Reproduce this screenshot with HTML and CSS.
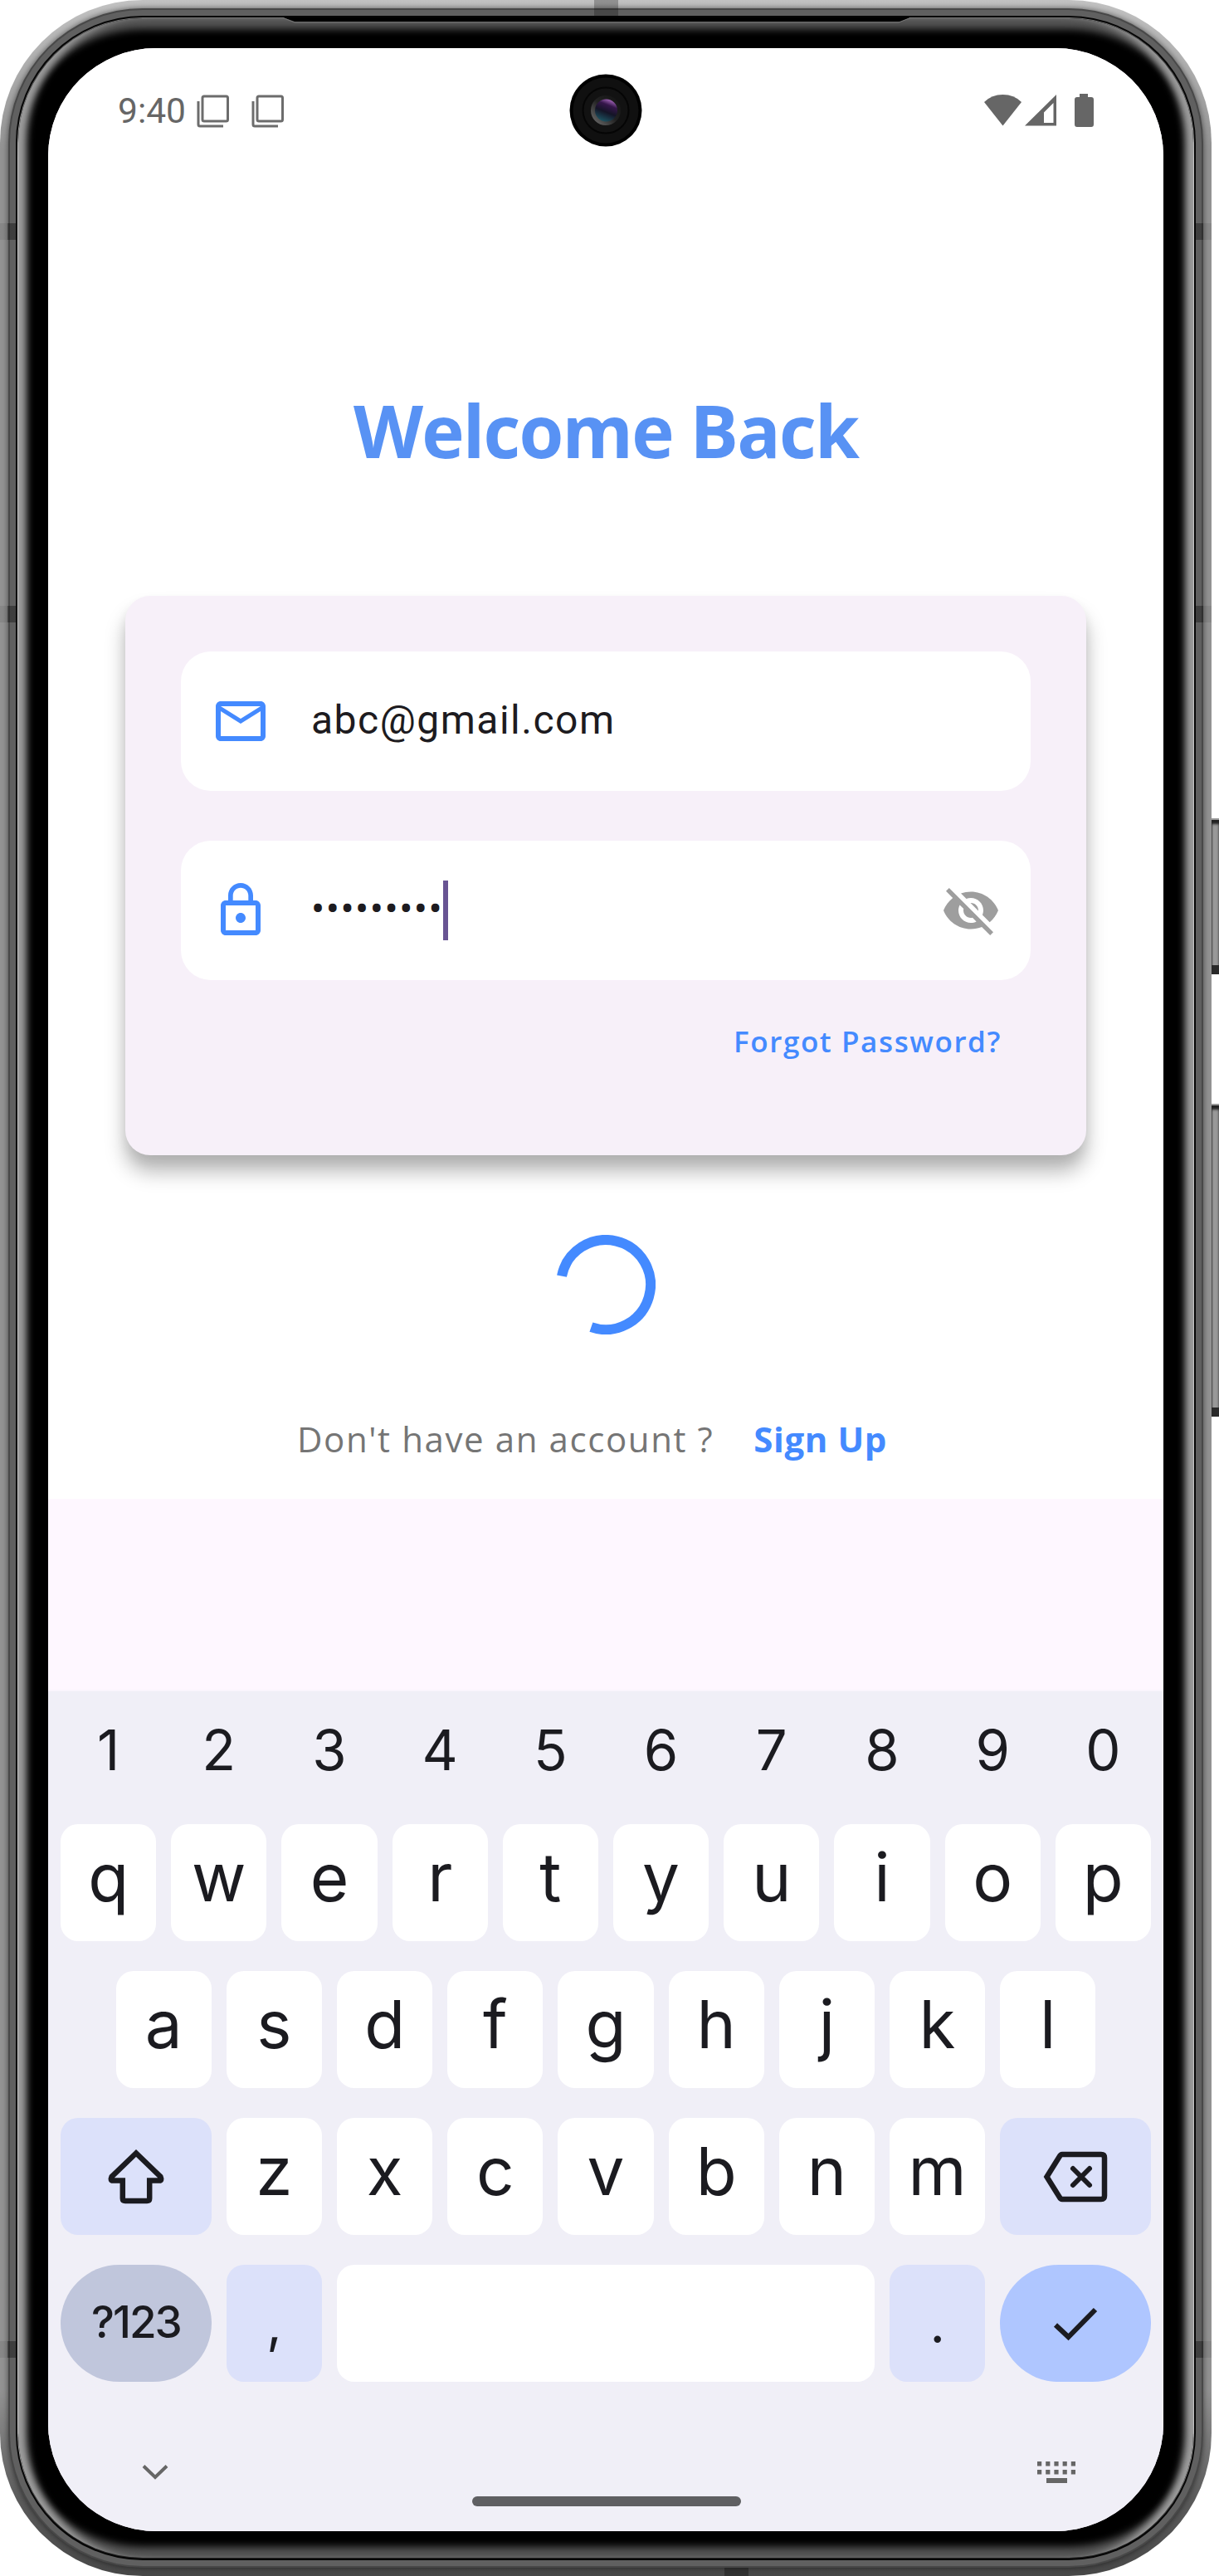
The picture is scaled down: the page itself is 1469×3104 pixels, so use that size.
FILE: index.html
```html
<!DOCTYPE html>
<html lang="en">
<head>
<meta charset="utf-8">
<title>Welcome Back</title>
<link rel="stylesheet" href="styles.css">
</head>
<body>
<div class="device">
  <div class="phone"><div class="rim-dark"><div class="rim-mid"><div class="rim-seam"><div class="rim-light"><div class="bezel">
    <div class="screen">
      <header class="status">
        <span class="time">9:40</span>
        <svg class="copy" width="40" height="40" viewBox="0 0 40 40"><rect x="7" y="2" width="30.500" height="30" rx="2"/><path d="M2 8v28q0 2 2 2h28"/></svg>
        <svg class="copy" width="40" height="40" viewBox="0 0 40 40"><rect x="7" y="2" width="30.500" height="30" rx="2"/><path d="M2 8v28q0 2 2 2h28"/></svg>
        <svg class="signals" width="134" height="42" viewBox="0 0 134 42"><path d="M23.500 39.500L1 11Q10 2 23.500 2T46 11z"/><path fill-rule="evenodd" d="M88 2v37.500H50zM84.500 12L73 23.500V36h11.500z"/><path d="M116 1h10v4h4q3 0 3 3v30q0 3-3 3h-17q-3 0-3-3V8q0-3 3-3h3z"/></svg>
      </header>
      <main class="login">
        <h1>Welcome Back</h1>
        <section class="card">
          <div class="field">
            <svg class="lead" viewBox="0 0 24 24"><path d="M22 6c0-1.100-.9-2-2-2H4c-1.100 0-2 .9-2 2v12c0 1.100.9 2 2 2h16c1.100 0 2-.9 2-2V6zm-2 0l-8 5-8-5h16zm0 12H4V8l8 5 8-5v10z"/></svg>
            <span class="value">abc@gmail.com</span>
          </div>
          <div class="field">
            <svg class="lead" viewBox="0 0 24 24"><path d="M12 17c1.100 0 2-.9 2-2s-.9-2-2-2-2 .9-2 2 .9 2 2 2zm6-9h-1V6c0-2.760-2.240-5-5-5S7 3.240 7 6v2H6c-1.100 0-2 .9-2 2v10c0 1.100.9 2 2 2h12c1.100 0 2-.9 2-2V10c0-1.100-.9-2-2-2zM8.900 6c0-1.710 1.390-3.100 3.100-3.100s3.100 1.390 3.100 3.100v2H8.900V6zM18 20H6V10h12v10z"/></svg>
            <span class="value">•••••••••</span><span class="caret"></span>
            <svg class="eye" viewBox="0 0 24 24"><path d="M12 7c2.760 0 5 2.240 5 5 0 .65-.13 1.260-.36 1.830l2.920 2.920c1.510-1.260 2.700-2.890 3.430-4.750-1.730-4.390-6-7.500-11-7.500-1.400 0-2.740.25-3.980.7l2.160 2.160C10.740 7.130 11.350 7 12 7zM2 4.270l2.280 2.280.46.46C3.080 8.300 1.780 10.020 1 12c1.730 4.390 6 7.500 11 7.500 1.550 0 3.030-.3 4.380-.84l.42.42L19.730 22 21 20.730 3.270 3 2 4.270zM7.530 9.800l1.550 1.550c-.05.21-.08.43-.08.65 0 1.660 1.340 3 3 3 .22 0 .44-.03.65-.08l1.550 1.550c-.67.33-1.410.53-2.200.53-2.760 0-5-2.240-5-5 0-.79.2-1.530.53-2.200zm4.310-.78l3.150 3.150.02-.16c0-1.660-1.340-3-3-3l-.17.01z"/></svg>
          </div>
          <a class="forgot">Forgot Password?</a>
        </section>
        <svg class="spinner" width="120" height="120" viewBox="0 0 120 120"><path d="M7 49.700A54 54 0 1 1 42.400 111.100"/></svg>
        <p class="signup"><span>Don't have an account ?</span><a>Sign Up</a></p>
      </main>
      <section class="keyboard">
        <div class="digits"><span>1</span><span>2</span><span>3</span><span>4</span><span>5</span><span>6</span><span>7</span><span>8</span><span>9</span><span>0</span></div>
        <div class="row"><b>q</b><b>w</b><b>e</b><b>r</b><b>t</b><b>y</b><b>u</b><b>i</b><b>o</b><b>p</b></div>
        <div class="row"><b>a</b><b>s</b><b>d</b><b>f</b><b>g</b><b>h</b><b>j</b><b>k</b><b>l</b></div>
        <div class="row">
          <b class="wide tint"><svg width="72" height="70" viewBox="0 0 72 70"><path d="M36 6.500L6.500 35Q4.500 39.500 8 39.500H19.800V61q0 3 3 3H49.200q3 0 3-3V39.500H64Q67.500 39.500 65.500 35z"/></svg></b>
          <b>z</b><b>x</b><b>c</b><b>v</b><b>b</b><b>n</b><b>m</b>
          <b class="wide tint"><svg width="78" height="62" viewBox="0 0 78 62"><path d="M23 4H70Q74 4 74 8V54Q74 58 70 58H23Q21 58 19.500 55L4.500 31 19.500 7Q21 4 23 4z"/><path class="cross" d="M36 21L56 41M56 21L36 41"/></svg></b>
        </div>
        <div class="row">
          <b class="wide mode">?123</b>
          <b class="tint punct">,</b>
          <b class="space"></b>
          <b class="tint punct">.</b>
          <b class="wide enter"><svg width="54" height="42" viewBox="0 0 54 42"><path class="check" d="M3 22.500L18.500 37 51 4"/></svg></b>
        </div>
        <div class="nav">
          <svg class="hide" width="32" height="20" viewBox="0 0 32 20"><path d="M2 2.500L16 16 30 2.500" fill="none" stroke="#666" stroke-width="4"/></svg>
          <span class="handle"></span>
          <svg class="layout" width="46" height="26" viewBox="0 0 46 26"><path d="M0 2.750h46M0 12.750h46" fill="none" stroke="#666" stroke-width="5.500" stroke-dasharray="5.200 5"/><path d="M11 20h25v6H11z" fill="#666"/></svg>
        </div>
      </section>
    </div>
  </div></div></div></div></div></div>
  <svg class="speaker" width="756" height="7" viewBox="0 0 756 7"><path d="M0 0h756l-12 5H14z" fill="#000"/><path d="M0 .5l14 5.500H742L756 .5" fill="none" stroke="#777"/></svg>
  <i class="band l1"></i><i class="band l2"></i><i class="band l3"></i>
  <i class="band r1"></i><i class="band r2"></i><i class="band r3"></i>
  <i class="band top"></i><i class="band bottom"></i>
  <i class="button power"></i><i class="button volume"></i>
  <svg class="camera" width="88" height="88" viewBox="0 0 88 88">
    <defs>
      <linearGradient id="ring" x1="0" y1="1" x2="1" y2="0"><stop offset="0" stop-color="#777"/><stop offset=".5" stop-color="#222"/><stop offset="1" stop-color="#111"/></linearGradient>
      <linearGradient id="lens" x1=".8" y1="0" x2=".4" y2="1"><stop offset="0" stop-color="#c07ad6"/><stop offset=".3" stop-color="#35164a"/><stop offset=".6" stop-color="#141426"/><stop offset="1" stop-color="#1d5260"/></linearGradient>
    </defs>
    <circle cx="44" cy="44" r="43.500" fill="#000"/><circle cx="44" cy="44" r="39.500" fill="#101010"/><circle cx="44" cy="44" r="27.500" fill="#121212" stroke="#050505" stroke-width="2"/><circle cx="44" cy="44" r="18" fill="url(#ring)"/><circle cx="44.500" cy="44" r="13.500" fill="url(#lens)"/>
  </svg>
</div>
</body>
</html>
```
FILE: styles.css
```css
* { box-sizing: border-box; }
body { margin: 0; background: #fff; font-family: Roboto, sans-serif; }
.device { position: relative; width: 1469px; height: 3104px; overflow: hidden; }
svg { display: block; flex: none; }

/* Metal frame, outermost ring first */
.phone {
  width: 1460px; height: 3104px; padding: 10px; border-radius: 172px; overflow: hidden;
  background: linear-gradient(#c2c2c2 0, #b4b4b4 60px, #939393 180px, #939393 2880px, #5c5c5c 3010px, #484848 100%);
}
.rim-dark { height: 100%; padding: 2px; border-radius: 162px; background: #484848; box-shadow: 0 0 7px rgba(0,0,0,.55); }
.rim-mid { height: 100%; padding: 7px; border-radius: 160px; background: #606060; }
.rim-seam { height: 100%; padding: 2px; border-radius: 153px; background: #050505; }
.rim-light { height: 100%; padding: 1px; border-radius: 151px; background: linear-gradient(#777 0, #444 60px, #c4c4c4 170px, #c4c4c4 2900px, #222 3030px); }
.bezel {
  height: 100%; padding: 36px; border-radius: 150px; background: #000;
  box-shadow: inset 15px 0 8px -5px #9c9c9c, inset -15px 0 8px -5px #9c9c9c, inset 0 18px 10px -5px #555, inset 0 -18px 10px -5px #555;
}
.screen { width: 1344px; height: 2992px; border-radius: 130px; overflow: hidden; background: #fef7ff; display: flex; flex-direction: column; }

.status { height: 150px; background: #fff; display: flex; align-items: flex-start; padding: 56px 83px 0 84px; color: #666; }
.time { font-size: 42.500px; line-height: 42px; width: 95px; margin-top: -1px; }
.copy { width: 40px; margin-right: 26px; fill: none; stroke: #6c6c6c; stroke-width: 3; }
.signals { margin-left: auto; margin-top: -2px; fill: #666; }

.login { height: 1598px; background: #fff; display: flex; flex-direction: column; align-items: center; padding-top: 250px; }
h1 { margin: 0 0 140px; font: 700 87px/120px "Open Sans", sans-serif; letter-spacing: -1.800px; color: #5892f4; }
.card { width: 1158px; height: 674px; border-radius: 30px; background: #f7f0f9; padding: 67px; display: flex; flex-direction: column; box-shadow: 0 20px 24px rgba(0,0,0,.28), 0 8px 14px rgba(0,0,0,.06); }
.field { height: 168px; margin-bottom: 60px; border-radius: 36px; background: #fff; display: flex; align-items: center; padding: 0 36px; }
.lead { width: 72px; height: 72px; margin-right: 49px; fill: #448aff; }
.value { font-size: 48px; line-height: 72px; letter-spacing: 1.500px; color: #1d1b20; white-space: nowrap; position: relative; top: -1px; }
.caret { width: 6px; height: 72px; background: #685493; }
.eye { width: 72px; height: 72px; margin-left: auto; fill: #9e9e9e; }
.forgot { align-self: flex-end; margin: -11px 35px 0 0; font: 600 35px/50px "Open Sans", sans-serif; letter-spacing: 1.600px; color: #448aff; white-space: nowrap; }
.spinner { margin-top: 96px; fill: none; stroke: #448aff; stroke-width: 12; }
.signup { margin: 96px 0 0 -33px; display: flex; gap: 48px; font: 500 42px/60px "Open Sans", sans-serif; letter-spacing: 1.600px; color: #757575; white-space: nowrap; }
.signup a { color: #448aff; font-weight: 700; letter-spacing: .6px; }

.keyboard { margin-top: auto; height: 1012px; padding: 0 15px; background: #f0eff7; box-shadow: 0 0 4px #f0eff7; color: #1b1b20; display: flex; flex-direction: column; font-family: Inter, sans-serif; }
.digits { height: 160px; padding-bottom: 19px; display: grid; grid-template-columns: repeat(10, 1fr); column-gap: 18px; align-items: center; text-align: center; font-size: 67px; line-height: 80px; }
.row { height: 141px; margin-bottom: 36px; display: flex; gap: 18px; justify-content: center; }
.row b { width: 115.200px; border-radius: 21px; background: #fff; font-weight: 400; font-size: 80px; line-height: 100px; padding-bottom: 13px; display: flex; align-items: center; justify-content: center; }
.row .wide { width: 181.800px; padding-bottom: 0; }
.row .tint { background: #dce1fa; }
.row .mode { border-radius: 71px; background: #c0c6dc; font-weight: 500; font-size: 53px; letter-spacing: -2px; padding-bottom: 3px; }
.row .space { flex: 1; }
.row .punct { font-size: 64px; padding-bottom: 0; }
.row .enter { border-radius: 71px; background: #afc6ff; }
.row svg { fill: none; stroke: #1b1b20; stroke-width: 6.500; }
.row .cross { stroke-linecap: round; stroke-width: 6; }
.row .check { stroke-width: 6; }
.nav { flex: 1; display: flex; justify-content: space-between; padding: 58px 91px 0 98px; }
.handle { width: 324px; height: 12px; margin-top: 44px; margin-left: 8px; border-radius: 6px; background: #5f5f62; }
.hide { margin-top: 5px; }
.layout { margin-top: 2px; }

/* Hardware details lying over the frame */
.camera { position: absolute; left: 686px; top: 89px; }
.speaker { position: absolute; left: 341px; top: 21px; }
.band { position: absolute; }
.l1, .l2, .l3 { left: 0; width: 19px; height: 20px; background: linear-gradient(90deg, rgba(0,0,0,.08) 50%, rgba(0,0,0,.35) 50%); }
.r1, .r2, .r3 { left: 1441px; width: 19px; height: 20px; background: linear-gradient(270deg, rgba(0,0,0,.08) 50%, rgba(0,0,0,.35) 50%); }
.l1, .r1 { top: 269px; }
.l2, .r2 { top: 730px; }
.l3, .r3 { top: 2821px; }
.top { left: 716px; top: 0; width: 29px; height: 19px; background: rgba(0,0,0,.25); }
.bottom { left: 873px; top: 3094px; width: 29px; height: 10px; background: rgba(0,0,0,.3); }
.button { position: absolute; left: 1460px; width: 9px; background: #999; border-top: 2px solid #999; border-bottom: 11px solid #292929; box-shadow: inset 0 5px 3px #222, inset 1px 0 #666; }
.power { top: 986px; height: 188px; }
.volume { top: 1330px; height: 377px; }
```
